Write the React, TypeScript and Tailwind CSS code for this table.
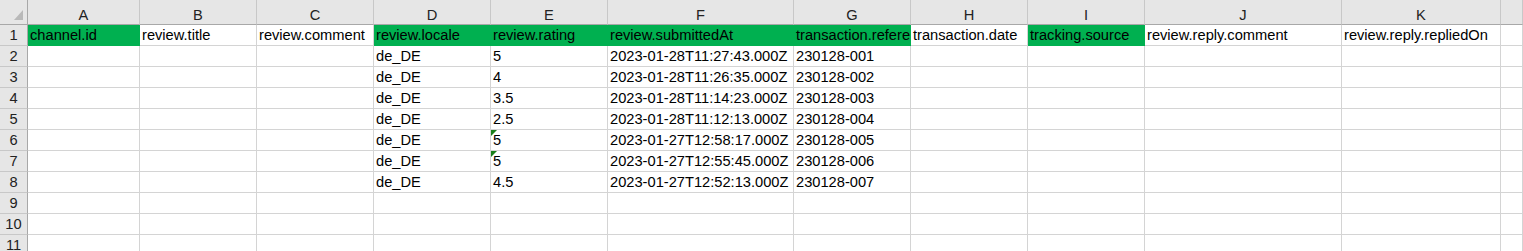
const COLS = ['A', 'B', 'C', 'D', 'E', 'F', 'G', 'H', 'I', 'J', 'K', '']

const HEADERS = [
  'channel.id',
  'review.title',
  'review.comment',
  'review.locale',
  'review.rating',
  'review.submittedAt',
  'transaction.reference',
  'transaction.date',
  'tracking.source',
  'review.reply.comment',
  'review.reply.repliedOn',
  '',
]

// which header columns are filled green
const GREEN = [true, false, false, true, true, true, true, false, true, false, false, false]

const DATA: [string, string, string, string, boolean][] = [
  ['de_DE', '5', '2023-01-28T11:27:43.000Z', '230128-001', false],
  ['de_DE', '4', '2023-01-28T11:26:35.000Z', '230128-002', false],
  ['de_DE', '3.5', '2023-01-28T11:14:23.000Z', '230128-003', false],
  ['de_DE', '2.5', '2023-01-28T11:12:13.000Z', '230128-004', false],
  ['de_DE', '5', '2023-01-27T12:58:17.000Z', '230128-005', true],
  ['de_DE', '5', '2023-01-27T12:55:45.000Z', '230128-006', true],
  ['de_DE', '4.5', '2023-01-27T12:52:13.000Z', '230128-007', false],
]

function rowCells(r: number): { text: string; flag?: boolean }[] {
  const cells = COLS.map(() => ({ text: '' as string, flag: false }))
  const d = DATA[r - 2]
  if (d) {
    cells[3] = { text: d[0], flag: false }
    cells[4] = { text: d[1], flag: d[4] }
    cells[5] = { text: d[2], flag: false }
    cells[6] = { text: d[3], flag: false }
  }
  return cells
}

function Corner() {
  return (
    <div className="relative h-[25px] border-r border-b border-r-[#a8a8a8] border-b-[#a8a8a8] bg-[#e6e6e6]">
      <svg className="absolute left-[14px] top-[10px]" width="10" height="11" viewBox="0 0 10 11">
        <polygon points="9,0 9,10 0,10" fill="#b9b9b9" />
      </svg>
    </div>
  )
}

export default function App() {
  const rows = [2, 3, 4, 5, 6, 7, 8, 9, 10, 11]
  return (
    <div
      className="h-[251px] w-[1523px] overflow-hidden bg-white text-black"
      style={{ fontFamily: '"Liberation Sans", Arial, sans-serif' }}
    >
      <div className="grid grid-cols-[28px_112px_117px_117px_117px_117px_186px_117px_117px_117px_197px_159px_1fr] text-[14.67px]">
        <Corner />
        {COLS.map((c, i) => (
          <div
            key={'h' + i}
            className="flex h-[25px] items-center justify-center border-r border-b border-r-[#c8c8c8] border-b-[#a8a8a8] bg-[#e6e6e6] pt-[5px] text-[#222]"
          >
            {c}
          </div>
        ))}

        <div className="flex h-[21px] items-center justify-center border-r border-b border-r-[#a8a8a8] border-b-[#c8c8c8] bg-[#e6e6e6] text-[#222]">
          1
        </div>
        {HEADERS.map((h, i) => (
          <div
            key={'t' + i}
            className={
              GREEN[i]
                ? 'h-[21px] overflow-hidden whitespace-nowrap border-r border-b border-[#00b050] bg-[#00b050] pl-[2px] leading-[21px]'
                : 'h-[21px] overflow-hidden whitespace-nowrap border-r border-b border-[#d4d4d4] pl-[2px] leading-[21px]'
            }
          >
            {h}
          </div>
        ))}

        {rows.map((r) => (
          <Row key={r} n={r} />
        ))}
      </div>
    </div>
  )
}

function Row({ n }: { n: number }) {
  const cells = rowCells(n)
  return (
    <>
      <div className="flex h-[21px] items-center justify-center border-r border-b border-r-[#a8a8a8] border-b-[#c8c8c8] bg-[#e6e6e6] text-[#222]">
        {n}
      </div>
      {cells.map((c, i) => (
        <div
          key={i}
          className="relative h-[21px] overflow-hidden whitespace-nowrap border-r border-b border-[#d4d4d4] pl-[2px] leading-[21px]"
        >
          {c.flag && (
            <svg className="absolute left-0 top-0" width="6" height="6" viewBox="0 0 6 6">
              <polygon points="0,0 6,0 0,6" fill="#1a7f1a" />
            </svg>
          )}
          {c.text}
        </div>
      ))}
    </>
  )
}
